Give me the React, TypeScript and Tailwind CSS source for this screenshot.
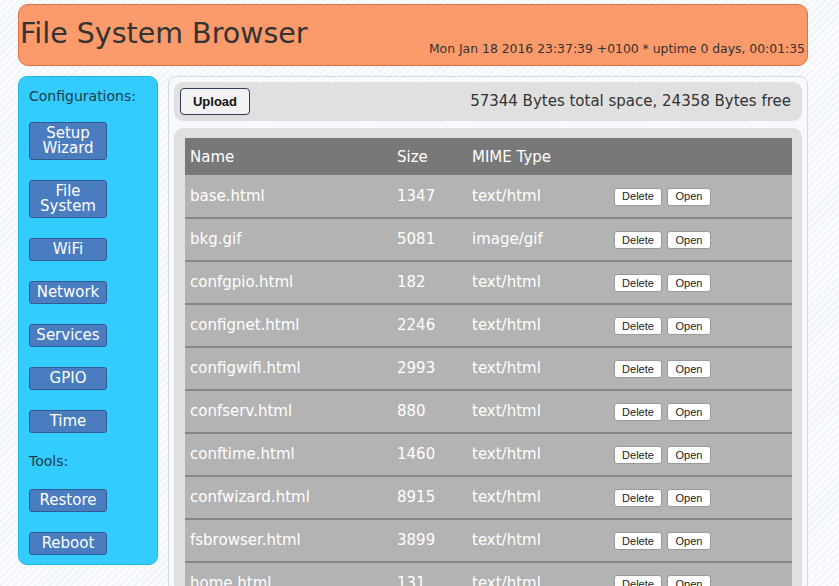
import React from "react"

const configItems = [["Setup", "Wizard"], ["File", "System"], ["WiFi"], ["Network"], ["Services"], ["GPIO"], ["Time"]]
const toolItems = ["Restore", "Reboot"]

const files = [
  ["base.html", "1347", "text/html"],
  ["bkg.gif", "5081", "image/gif"],
  ["confgpio.html", "182", "text/html"],
  ["confignet.html", "2246", "text/html"],
  ["configwifi.html", "2993", "text/html"],
  ["confserv.html", "880", "text/html"],
  ["conftime.html", "1460", "text/html"],
  ["confwizard.html", "8915", "text/html"],
  ["fsbrowser.html", "3899", "text/html"],
  ["home.html", "131", "text/html"],
]

function NavButton({ lines }: { lines: string[] }) {
  return (
    <button className="w-[78px] rounded-[3px] border border-[#2f5a92] bg-[#4a7cc0] text-[15px] leading-[15px] text-white py-[3px]">
      {lines.map((l) => (
        <div key={l}>{l}</div>
      ))}
    </button>
  )
}

export default function App() {
  return (
    <div className="h-[586px] overflow-hidden bg-[#f6f8fb] bg-[repeating-linear-gradient(135deg,#f9fbfd_0px,#f9fbfd_3px,#eaeff6_4px,#f9fbfd_5px)] text-[#333] font-['DejaVu_Sans',Verdana,sans-serif] px-[18px] pt-[4px]">
      {/* header */}
      <div className="w-[790px] h-[62px] rounded-[10px] border border-[#e46f45] bg-[#fb9a6a] flex items-end justify-between pl-[1px] pr-[2px] pb-[10px]">
        <div className="text-[28.5px] leading-none text-[#333] mb-[7px]">File System Browser</div>
        <div className="text-[12.4px] leading-none text-[#333]">Mon Jan 18 2016 23:37:39 +0100 * uptime 0 days, 00:01:35</div>
      </div>

      <div className="flex gap-[10px] mt-[10px]">
        {/* sidebar */}
        <div className="w-[140px] h-[489px] shrink-0 rounded-[9px] border border-[#22b5e8] bg-[#33ccff] pl-[10px] pt-[10px]">
          <div className="text-[14px] leading-[18px] text-[#1d3b4a]">Configurations:</div>
          <div className="flex flex-col gap-[20px] mt-[17px]">
            {configItems.map((l) => (
              <NavButton key={l.join(" ")} lines={l} />
            ))}
          </div>
          <div className="text-[14px] leading-[18px] text-[#1d3b4a] mt-[19px]">Tools:</div>
          <div className="flex flex-col gap-[20px] mt-[19px]">
            {toolItems.map((l) => (
              <NavButton key={l} lines={[l]} />
            ))}
          </div>
        </div>

        {/* main */}
        <div className="w-[640px] h-[520px] rounded-[8px] border border-[#d3dae3] bg-[#f9fafc]/40 px-[5px] pt-[5px]">
          <div className="h-[39px] rounded-[9px] bg-[#e0e0e0] flex items-center justify-between pl-[6px] pr-[11px]">
            <button className="h-[27px] w-[70px] rounded-[4px] border border-[#2c3a5c] bg-[#f2f2f2] text-[13px] font-bold font-['Liberation_Sans',Arial,sans-serif] text-[#111]">
              Upload
            </button>
            <div className="text-[15px] text-[#333]">57344 Bytes total space, 24358 Bytes free</div>
          </div>

          <div className="mt-[7px] rounded-[9px] bg-[#e0e0e0] px-[11px] pt-[10px] pb-[10px]">
            <table className="w-[607px] border-collapse text-[15px] text-white">
              <thead>
                <tr className="bg-[#787878] h-[37px]">
                  <th className="text-left font-normal pl-[5px] w-[212px] pt-[2px]">Name</th>
                  <th className="text-left font-normal w-[75px] pt-[2px]">Size</th>
                  <th className="text-left font-normal w-[142px] pt-[2px]">MIME Type</th>
                  <th></th>
                </tr>
              </thead>
              <tbody>
                {files.map(([name, size, type]) => (
                  <tr key={name} className="bg-[#b3b3b3] h-[43px] border-b-2 border-[#868686]">
                    <td className="pl-[5px]">{name}</td>
                    <td>{size}</td>
                    <td>{type}</td>
                    <td>
                      <div className="flex gap-[5px] pt-[1px]">
                        <button className="h-[18px] w-[48px] rounded-[3px] bg-white border border-[#9a9a9a] text-[11px] leading-none text-[#222] font-['Liberation_Sans',Arial,sans-serif]">
                          Delete
                        </button>
                        <button className="h-[18px] w-[44px] rounded-[3px] bg-white border border-[#9a9a9a] text-[11px] leading-none text-[#222] font-['Liberation_Sans',Arial,sans-serif]">
                          Open
                        </button>
                      </div>
                    </td>
                  </tr>
                ))}
              </tbody>
            </table>
          </div>
        </div>
      </div>
    </div>
  )
}
